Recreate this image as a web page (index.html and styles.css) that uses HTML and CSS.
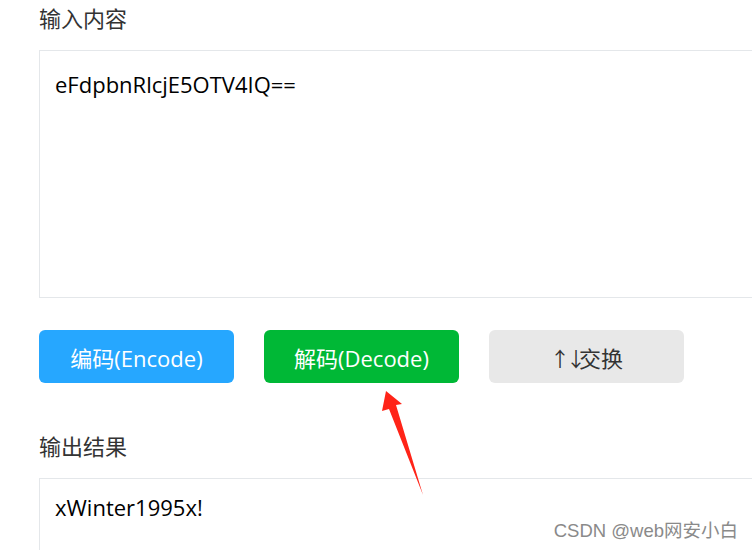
FILE: index.html
```html
<!DOCTYPE html>
<html>
<head>
    <title>Base64 编码解码</title>
    <meta charset="UTF-8">
    <link rel="stylesheet" href="styles.css">
</head>
<body>
    <div class="tool">
        <div class="field-label">输入内容</div>
        <div class="text-box input-box">eFdpbnRlcjE5OTV4IQ==</div>

        <div class="actions">
            <button class="btn btn-encode">编码(Encode)</button>
            <button class="btn btn-decode">解码(Decode)</button>
            <button class="btn btn-swap"><span class="swap-icon">↑↓</span>交换</button>
        </div>

        <div class="field-label">输出结果</div>
        <div class="text-box output-box">xWinter1995x!</div>
    </div>

    <!-- 标注箭头 -->
    <svg class="mark-arrow" width="60" height="120" viewBox="370 385 60 120">
        <polygon points="386,391 402,404 396,405 423,495 389,409 382,411" fill="#ff2418"/>
    </svg>

    <div class="watermark">CSDN @web网安小白</div>
</body>
</html>
```

FILE: styles.css
```css
html, body {
    margin: 0;
    padding: 0;
    overflow: hidden;
    background: #fff;
}
body {
    position: relative;
    height: 550px;
    font-family: "Open Sans", "Noto Sans CJK SC", sans-serif;
}
.tool {
    width: 780px;
    padding: 3px 0 0 39px;
}
.field-label {
    font-size: 22px;
    line-height: 30px;
    color: #333;
    margin-bottom: 17px;
}
.text-box {
    box-sizing: border-box;
    border: 1px solid #e4e7ea;
    padding: 18px 15px;
    font-size: 22px;
    line-height: 30px;
    color: #000;
}
.input-box {
    height: 248px;
}
.output-box {
    height: 200px;
    padding-top: 13px;
}
.actions {
    display: flex;
    gap: 30px;
    margin: 32px 0 48px;
}
.btn {
    width: 195px;
    height: 53px;
    border: none;
    border-radius: 6px;
    font-family: inherit;
    font-size: 22px;
    color: #fff;
    padding: 0;
    cursor: pointer;
}
.btn-encode {
    background-color: #26a7ff;
}
.btn-decode {
    background-color: #00b836;
}
.btn-swap {
    background-color: #e8e8e8;
    color: #333;
}
.swap-icon {
    display: inline-block;
    width: 24px;
    margin-right: 5px;
    letter-spacing: -4px;
    font-size: 20px;
}
.mark-arrow {
    position: absolute;
    left: 370px;
    top: 385px;
}
.watermark {
    position: absolute;
    right: 14px;
    bottom: 8px;
    font-family: "Liberation Sans", "Noto Sans CJK SC", sans-serif;
    font-size: 18.5px;
    color: #8a8a8a;
    text-shadow: 0 0 2px #fff;
}
```
